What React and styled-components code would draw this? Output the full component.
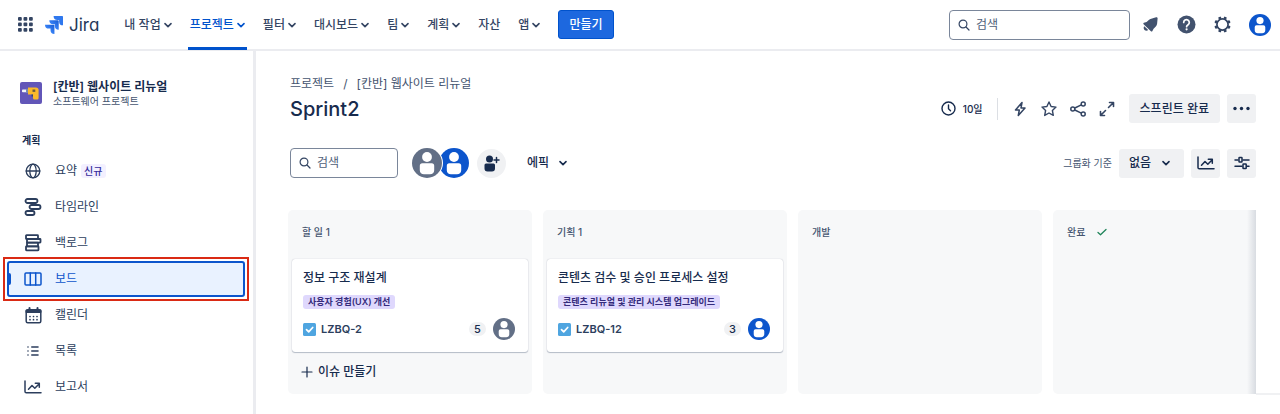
import styled, { createGlobalStyle, css } from "styled-components";

const GlobalStyle = createGlobalStyle`
  * {
    box-sizing: border-box;
  }
  body {
    margin: 0;
    background: #fff;
    color: #172b4d;
    font-family: Inter, "Noto Sans CJK KR", sans-serif;
    font-size: 12px;
    line-height: 16px;
  }
  button, input, select {
    font: inherit;
    color: inherit;
  }
  svg {
    display: block;
    flex-shrink: 0;
  }
`;

const Page = styled.div`
  min-height: 100vh;
  display: flex;
  flex-direction: column;
`;

/* ---------- top bar ---------- */
const Header = styled.header`
  display: flex;
  align-items: center;
  height: 51px;
  padding: 0 9px 0 18px;
  border-bottom: 2px solid #ebecf0;
`;

const IconButton = styled.button`
  display: flex;
  align-items: center;
  justify-content: center;
  padding: 0;
  border: none;
  background: transparent;
  color: #344563;
  cursor: pointer;
`;

const Logo = styled.a`
  display: flex;
  align-items: center;
  gap: 6px;
  margin: 0 23px 0 12px;
  color: #253858;
  text-decoration: none;
  font-size: 17px;
  line-height: 20px;
  font-feature-settings: "cv11", "ss03";
`;

const Nav = styled.nav`
  display: flex;
  align-self: stretch;
  gap: 14px;
`;

const NavItem = styled.button`
  display: flex;
  align-items: center;
  gap: 3px;
  height: 50px;
  padding: 0 2px;
  border: none;
  background: transparent;
  font-weight: 500;
  white-space: nowrap;
  color: ${({ $active }) => ($active ? "#0052cc" : "#344563")};
  box-shadow: ${({ $active }) => ($active ? "inset 0 -3px 0 #0052cc" : "none")};
  cursor: pointer;
`;

const CreateButton = styled.button`
  height: 29px;
  margin-left: 16px;
  padding: 0 10px;
  border: 1px solid #0052cc;
  border-radius: 3px;
  background: #1d68df;
  color: #fff;
  font-weight: 500;
  white-space: nowrap;
  cursor: pointer;
`;

const HeaderTools = styled.div`
  display: flex;
  align-items: center;
  gap: 12px;
  margin-left: auto;
`;

const SearchBox = styled.label`
  display: flex;
  align-items: center;
  gap: 6px;
  width: ${({ $wide }) => ($wide ? "181px" : "108px")};
  height: 30px;
  padding: 0 8px;
  border: 1px solid #7a869a;
  border-radius: 4px;
  background: #fff;
  color: #344563;
`;

const SearchInput = styled.input`
  flex: 1;
  min-width: 0;
  padding: 0;
  border: none;
  outline: none;
  background: transparent;
  &::placeholder {
    color: #505f79;
    opacity: 1;
  }
`;

/* ---------- sidebar ---------- */
const Body = styled.div`
  flex: 1;
  display: flex;
`;

const Sidebar = styled.aside`
  width: 256px;
  flex-shrink: 0;
  padding: 28px 8px 8px 7px;
  border-right: 3px solid #ebecf0;
`;

const Project = styled.div`
  display: flex;
  align-items: center;
  gap: 11px;
  padding-left: 13px;
`;

const ProjectName = styled.div`
  font-weight: 600;
`;

const ProjectType = styled.div`
  font-size: 10px;
  line-height: 12px;
  color: #44546f;
`;

const GroupLabel = styled.h2`
  margin: 25px 0 5px;
  padding-left: 15px;
  font-size: 10px;
  line-height: 16px;
  font-weight: 600;
`;

const SideLink = styled.a`
  position: relative;
  display: flex;
  align-items: center;
  gap: 12px;
  height: 36px;
  padding: 0 14px;
  border: 2px solid transparent;
  border-radius: 3px;
  color: #2c3e5d;
  text-decoration: none;

  ${({ $active }) =>
    $active &&
    css`
      border-color: #0c55cc;
      background: #e9f2ff;
      color: #0c55cc;
      /* left marker */
      &::before {
        content: "";
        position: absolute;
        left: -1px;
        top: 10px;
        width: 3px;
        height: 12px;
        border-radius: 0 2px 2px 0;
        background: #0c55cc;
      }
      /* red highlight around the current view */
      &::after {
        content: "";
        position: absolute;
        inset: -6px;
        border: 2px solid #da2a14;
      }
    `}
`;

const SideIcon = styled.span`
  display: flex;
  justify-content: center;
  width: 20px;
`;

const SideText = styled.span`
  display: flex;
  align-items: center;
  gap: 4px;
`;

const NewBadge = styled.span`
  padding: 0 3px;
  border-radius: 3px;
  background: #f3f0ff;
  color: #352c9c;
  font-size: 10px;
  line-height: 14px;
  font-weight: 500;
`;

/* ---------- main ---------- */
const Main = styled.main`
  flex: 1;
  min-width: 0;
  padding: 25px 24px 20px 32px;
`;

const Breadcrumb = styled.div`
  display: flex;
  gap: 9px;
  padding-left: 2px;
  color: #44546f;
`;

const Crumb = styled.a`
  color: inherit;
  text-decoration: none;
`;

const Row = styled.div`
  display: flex;
  align-items: center;
  justify-content: space-between;
  padding-left: 2px;
  margin-top: ${({ $top }) => $top}px;
`;

const Group = styled.div`
  display: flex;
  align-items: center;
  gap: ${({ $gap }) => $gap}px;
`;

const Title = styled.h1`
  margin: 0;
  font-size: 20px;
  line-height: 28px;
  font-weight: 500;
`;

const DaysLeft = styled.span`
  display: flex;
  align-items: center;
  gap: 7px;
  font-size: 10px;
  font-weight: 500;
`;

const Divider = styled.span`
  width: 1px;
  height: 22px;
  background: #dcdfe4;
`;

const GrayButton = styled.button`
  display: flex;
  align-items: center;
  justify-content: center;
  height: 29px;
  min-width: 29px;
  padding: ${({ $square }) => ($square ? "0" : "0 11px")};
  border: none;
  border-radius: 3px;
  background: #f0f1f3;
  font-weight: 500;
  white-space: nowrap;
  cursor: pointer;
`;

const PlainButton = styled.button`
  display: flex;
  align-items: center;
  gap: 10px;
  padding: 0;
  border: none;
  background: transparent;
  font-weight: 500;
  cursor: pointer;
`;

const People = styled.div`
  display: flex;
  align-items: center;
  margin-left: 13px;
`;

const PersonButton = styled.button`
  position: relative;
  display: flex;
  padding: 1px;
  margin-right: -5px;
  border: none;
  border-radius: 50%;
  background: #fff;
  cursor: pointer;
  z-index: ${({ $z }) => $z};
`;

const AddPerson = styled.button`
  display: flex;
  align-items: center;
  justify-content: center;
  width: 29px;
  height: 29px;
  margin: 0 21px 0 12px;
  padding: 0;
  border: none;
  border-radius: 50%;
  background: #f0f1f3;
  cursor: pointer;
`;

const GroupByLabel = styled.label`
  font-size: 10px;
  color: #44546f;
`;

const SelectWrap = styled.div`
  position: relative;
  svg {
    position: absolute;
    right: 14px;
    top: 10px;
    pointer-events: none;
  }
`;

const GroupSelect = styled.select`
  display: block;
  width: 65px;
  height: 29px;
  padding: 0 24px 0 10px;
  border: none;
  border-radius: 3px;
  appearance: none;
  background: #f0f1f3;
  font-weight: 500;
`;

/* ---------- board ---------- */
const BoardFrame = styled.div`
  position: relative;
  margin-top: 31px;
  /* scroll shadow on the right edge */
  &::after {
    content: "";
    position: absolute;
    top: 0;
    right: 0;
    bottom: 0;
    width: 9px;
    background: linear-gradient(to right, rgba(9, 30, 66, 0), rgba(9, 30, 66, 0.13));
  }
  /* scrollbar track end */
  &::before {
    content: "";
    position: absolute;
    left: 100%;
    bottom: -1px;
    width: 24px;
    height: 2px;
    background: #f0f1f3;
  }
`;

const Board = styled.div`
  display: flex;
  gap: 11px;
  overflow: hidden;
`;

const Column = styled.section`
  flex: 0 0 244px;
  min-height: 184px;
  padding: 0 4px 12px;
  border-radius: 5px;
  background: #f7f8f9;
`;

const ColumnHead = styled.h3`
  display: flex;
  align-items: center;
  gap: 12px;
  height: 43px;
  margin: 0 0 6px;
  padding: 0 10px;
  font-size: 10px;
  font-weight: 500;
  color: #44546f;
`;

const Card = styled.article`
  padding: 10px 13px 12px 11px;
  border-radius: 3px;
  background: #fff;
  box-shadow: 0 1px 1px rgba(9, 30, 66, 0.25), 0 0 1px rgba(9, 30, 66, 0.31);
`;

const CardTitle = styled.div`
  line-height: 18px;
  font-weight: 500;
`;

const Epic = styled.span`
  display: block;
  width: fit-content;
  margin: 8px 0 9px;
  padding: 0 5px;
  border-radius: 3px;
  background: #dfd8fd;
  color: #352c7c;
  font-size: 9px;
  line-height: 14px;
  font-weight: 600;
  white-space: nowrap;
`;

const CardFooter = styled.div`
  display: flex;
  align-items: center;
  gap: 5px;
`;

const IssueKey = styled.a`
  flex: 1;
  color: #2c3e5d;
  text-decoration: none;
  font-size: 11px;
  font-weight: 600;
`;

const Points = styled.span`
  min-width: 17px;
  margin-right: 2px;
  padding: 0 5px;
  border-radius: 7px;
  background: #f0f1f3;
  font-size: 11px;
  line-height: 14px;
  font-weight: 500;
  text-align: center;
`;

const CreateIssue = styled.button`
  display: flex;
  align-items: center;
  gap: 5px;
  margin: 12px 0 0;
  padding: 0 9px;
  border: none;
  background: transparent;
  font-weight: 500;
  cursor: pointer;
`;

/* ---------- icons ---------- */
const Stroke = ({ w = 16, h, box, sw = 1.5, children }) => (
  <svg
    width={w}
    height={h || w}
    viewBox={box || `0 0 ${w} ${h || w}`}
    fill="none"
    stroke="currentColor"
    strokeWidth={sw}
    strokeLinecap="round"
    strokeLinejoin="round"
    aria-hidden="true"
  >
    {children}
  </svg>
);

const Chevron = () => (
  <Stroke w={8} sw={1.6}>
    <path d="M1 2.6 4 5.6 7 2.6" />
  </Stroke>
);

const SearchIcon = () => (
  <Stroke w={12} sw={1.2}>
    <circle cx="5" cy="5" r="3.9" />
    <path d="M8 8l3 3" />
  </Stroke>
);

const AppsIcon = () => (
  <svg width="15" height="15" viewBox="0 0 15 15" fill="currentColor" aria-hidden="true">
    {[0, 5.5, 11].map((y) =>
      [0, 5.5, 11].map((x) => <rect key={`${x}-${y}`} x={x} y={y} width="3.8" height="3.8" rx="1" />)
    )}
  </svg>
);

const JiraMark = () => (
  <svg width="18" height="18" viewBox="0 0 24 24" aria-hidden="true">
    <defs>
      <linearGradient id="jira-shade" x1="1" y1="0" x2="0.3" y2="0.7">
        <stop offset="0.1" stopColor="#1a5fd6" />
        <stop offset="1" stopColor="#3f8bff" />
      </linearGradient>
    </defs>
    <path
      fill="url(#jira-shade)"
      d="M11.571 11.513H0a5.218 5.218 0 0 0 5.232 5.215h2.13v2.057A5.215 5.215 0 0 0 12.575 24V12.518a1.005 1.005 0 0 0-1.005-1.005z"
    />
    <path
      fill="url(#jira-shade)"
      d="M17.294 5.757H5.736a5.215 5.215 0 0 0 5.215 5.214h2.129v2.058a5.218 5.218 0 0 0 5.215 5.214V6.758a1.001 1.001 0 0 0-1.001-1.001z"
    />
    <path
      fill="#2f78ee"
      d="M23.013 0H11.455a5.215 5.215 0 0 0 5.215 5.215h2.129v2.057A5.215 5.215 0 0 0 24 12.483V1.005A1.001 1.001 0 0 0 23.013 0z"
    />
  </svg>
);

const BellIcon = () => (
  <svg width="17" height="17" viewBox="0 0 17 17" fill="#42526e" aria-hidden="true">
    <path d="M15.200 1.400c.4.300.5.700.4 1.200l-.5 5.200c-.1 1-.6 2-1.300 2.700l-2.200 2.200-1.200 2.300c-.3.600-1.100.7-1.500.2L1.600 8.200c-.5-.5-.3-1.300.3-1.500l2.700-.8 2.200-2c.7-.6 1.500-1 2.400-1.200l4.900-1.400c.4-.1.800-.1 1.100.1z" />
    <path d="M2.300 10.200 6.200 14c-1 .9-2.700.9-3.700-.1-1-1-1.100-2.700-.2-3.700z" />
  </svg>
);

const HelpIcon = () => (
  <svg width="19" height="19" viewBox="0 0 19 19" aria-hidden="true">
    <circle cx="9.5" cy="9.5" r="9" fill="#42526e" />
    <path
      d="M6.700 7.400a2.800 2.800 0 1 1 4.400 2.300c-.9.600-1.500 1-1.500 2"
      fill="none"
      stroke="#fff"
      strokeWidth="1.700"
      strokeLinecap="round"
    />
    <circle cx="9.600" cy="14.300" r="1.100" fill="#fff" />
  </svg>
);

const GearIcon = () => (
  <svg width="17" height="17" viewBox="-8.5 -8.5 17 17" aria-hidden="true">
    <circle r="5.600" fill="none" stroke="currentColor" strokeWidth="1.700" />
    {[22.5, 67.5, 112.5, 157.5, 202.5, 247.5, 292.5, 337.5].map((a) => (
      <rect
        key={a}
        x="-1.400"
        y="-8.200"
        width="2.800"
        height="2.600"
        rx="0.700"
        fill="currentColor"
        transform={`rotate(${a})`}
      />
    ))}
  </svg>
);

const Avatar = ({ size, color }) => (
  <svg width={size} height={size} viewBox="0 0 30 30" aria-hidden="true">
    <circle cx="15" cy="15" r="15" fill={color} />
    <circle cx="15" cy="9" r="4.900" fill="#fff" />
    <path
      d="M10.300 15.200h9.400a2.500 2.500 0 0 1 2.500 2.500v4.500c0 2.400-1.800 4-4.200 4h-6c-2.400 0-4.200-1.600-4.200-4v-4.500a2.500 2.500 0 0 1 2.500-2.500z"
      fill="#fff"
    />
  </svg>
);

const ProjectIcon = () => (
  <svg width="22" height="22" viewBox="0 0 22 22" aria-hidden="true">
    <rect width="22" height="22" rx="2" fill="#6256b8" />
    <rect x="2" y="7.500" width="5" height="2.800" rx="0.800" fill="#f4f5f7" />
    <rect x="6" y="6.800" width="2.500" height="4.200" fill="#7a8bb0" />
    <path d="M8 5.500h8a2.600 2.600 0 0 1 2.600 2.600V16a1.500 1.500 0 0 1-1.500 1.500h-2.600a1.500 1.500 0 0 1-1.500-1.500v-3.500H8z" fill="#f9b82b" />
    <path d="M12.500 7.500h2.800v2.400h-2.800z" fill="#6b5b3c" />
    <path d="M11.500 12.500H13v2h-1.500z" fill="#344563" />
  </svg>
);

const GlobeIcon = () => (
  <Stroke w={16} sw={1.3}>
    <circle cx="8" cy="8" r="6.800" />
    <ellipse cx="8" cy="8" rx="3.200" ry="6.800" />
    <path d="M1.200 8h13.600" />
  </Stroke>
);

const TimelineIcon = () => (
  <Stroke w={18} sw={1.800}>
    <rect x="1.500" y="1" width="12" height="4" rx="2" />
    <rect x="5.500" y="7" width="11" height="4" rx="2" />
    <rect x="1.500" y="13" width="9" height="4" rx="2" />
  </Stroke>
);

const BacklogIcon = () => (
  <Stroke w={18} sw={1.800}>
    <rect x="2" y="1.200" width="12" height="3.800" rx="0.500" />
    <rect x="3" y="5" width="13.500" height="3.600" rx="0.500" />
    <path d="M3 8.600h11v3.700H3z" />
    <rect x="2" y="12.300" width="12.500" height="4" rx="0.500" />
  </Stroke>
);

const BoardIcon = () => (
  <Stroke w={18} h={14} sw={1.500}>
    <rect x="1" y="1" width="16" height="12" rx="1" />
    <path d="M6.300 1v12M11.700 1v12" />
  </Stroke>
);

const CalendarIcon = () => (
  <Stroke w={17} sw={1.500}>
    <rect x="1.200" y="2.800" width="14.600" height="13" rx="1.500" />
    <path d="M1.500 3.500h14v1.500h-14zM4.500 1v2M12.500 1v2" strokeWidth="2" />
    <path d="M5 9.500h.01M8.500 9.500h.01M12 9.500h.01M5 12.700h.01M8.500 12.700h.01M12 12.700h.01" strokeWidth="1.700" />
  </Stroke>
);

const ListIcon = () => (
  <Stroke w={12} sw={1.600}>
    <path d="M1 2h.01M1 6h.01M1 10h.01M4.800 2h6.200M4.800 6h6.200M4.800 10h6.200" />
  </Stroke>
);

const ChartIcon = () => (
  <Stroke w={18} h={14} sw={1.500}>
    <path d="M1 1v10.500c0 .8.500 1.300 1.300 1.300H17" />
    <path d="M4.500 9.300 8 5.500l2.800 2.700L15 4M11.300 3.200h4v4" />
  </Stroke>
);

const ClockIcon = () => (
  <Stroke w={15} sw={1.400}>
    <circle cx="7.500" cy="7.500" r="6.500" />
    <path d="M7.500 4v3.700l2 2" />
  </Stroke>
);

const BoltIcon = () => (
  <Stroke w={16} sw={1.500}>
    <path d="M10 1.500 3.500 9h3.800L6.300 14.500 13 7H9z" />
  </Stroke>
);

const StarIcon = () => (
  <Stroke w={16} sw={1.400}>
    <path d="m8 1 2.100 4.500 4.900.6-3.600 3.400.9 4.900L8 12l-4.300 2.400.9-4.900L1 6.100l4.900-.6z" />
  </Stroke>
);

const ShareIcon = () => (
  <Stroke w={16}>
    <circle cx="2.800" cy="8" r="2" />
    <circle cx="13.200" cy="3" r="2" />
    <circle cx="13.200" cy="13" r="2" />
    <path d="m4.800 7 6.500-3.200M4.800 9l6.500 3.200" />
  </Stroke>
);

const ExpandIcon = () => (
  <Stroke w={16} sw={1.600}>
    <path d="M10.500 1.500h4v4M14.500 1.500l-5 5M5.500 14.500h-4v-4M1.500 14.500l5-5" />
  </Stroke>
);

const DotsIcon = () => (
  <svg width="17" height="5" viewBox="0 0 17 5" fill="currentColor" aria-hidden="true">
    <circle cx="2" cy="2.500" r="1.700" />
    <circle cx="8.500" cy="2.500" r="1.700" />
    <circle cx="15" cy="2.500" r="1.700" />
  </svg>
);

const SlidersIcon = () => (
  <Stroke w={16} h={14}>
    <path d="M1 4h3M9 4h6M1 10.300h7M13 10.300h2" />
    <rect x="5" y="1.500" width="3" height="4.500" rx="0.500" />
    <rect x="9" y="8" width="3.200" height="4.500" rx="0.500" />
  </Stroke>
);

const AddPersonIcon = () => (
  <svg width="16" height="17" viewBox="0 0 16 17" aria-hidden="true">
    <circle cx="5.500" cy="4" r="3.500" fill="currentColor" />
    <path d="M2 8.500h7.500A1.500 1.500 0 0 1 11 10v3.500a3 3 0 0 1-3 3H3.500a3 3 0 0 1-3-3V10A1.500 1.500 0 0 1 2 8.500z" fill="currentColor" />
    <path d="M12.500 2.500v5M10 5h5" stroke="currentColor" strokeWidth="1.500" strokeLinecap="round" />
  </svg>
);

const TaskIcon = () => (
  <svg width="13" height="13" viewBox="0 0 13 13" role="img" aria-label="작업">
    <rect width="13" height="13" rx="1.500" fill="#4fa5e0" />
    <path d="m3.500 6.700 2.200 2.200 4-4.400" fill="none" stroke="#fff" strokeWidth="1.700" strokeLinecap="round" strokeLinejoin="round" />
  </svg>
);

const CheckIcon = () => (
  <Stroke w={10} h={8} sw={1.300}>
    <path d="m1 4.500 2.500 2.200L9 1.500" stroke="#1f845a" />
  </Stroke>
);

const PlusIcon = () => (
  <Stroke w={12} sw={1.200}>
    <path d="M6 1v10M1 6h10" />
  </Stroke>
);

/* ---------- data ---------- */
const GRAY = "#626f86";
const BLUE = "#0c55cc";

const navItems = [
  { label: "내 작업", menu: true },
  { label: "프로젝트", menu: true, active: true },
  { label: "필터", menu: true },
  { label: "대시보드", menu: true },
  { label: "팀", menu: true },
  { label: "계획", menu: true },
  { label: "자산" },
  { label: "앱", menu: true },
];

const sideItems = [
  { label: "요약", icon: <GlobeIcon />, badge: "신규" },
  { label: "타임라인", icon: <TimelineIcon /> },
  { label: "백로그", icon: <BacklogIcon /> },
  { label: "보드", icon: <BoardIcon />, active: true },
  { label: "캘린더", icon: <CalendarIcon /> },
  { label: "목록", icon: <ListIcon /> },
  { label: "보고서", icon: <ChartIcon /> },
];

const columns = [
  {
    name: "할 일 1",
    canCreate: true,
    cards: [{ title: "정보 구조 재설계", epic: "사용자 경험(UX) 개선", id: "LZBQ-2", points: 5, color: GRAY }],
  },
  {
    name: "기획 1",
    cards: [
      {
        title: "콘텐츠 검수 및 승인 프로세스 설정",
        epic: "콘텐츠 리뉴얼 및 관리 시스템 업그레이드",
        id: "LZBQ-12",
        points: 3,
        color: BLUE,
      },
    ],
  },
  { name: "개발", cards: [] },
  { name: "완료", done: true, cards: [] },
];

const TopBar = () => (
  <Header>
    <IconButton aria-label="앱 전환"><AppsIcon /></IconButton>
    <Logo href="#"><JiraMark />Jira</Logo>
    <Nav>
      {navItems.map(({ label, menu, active }) => (
        <NavItem key={label} $active={active}>
          {label}
          {menu && <Chevron />}
        </NavItem>
      ))}
    </Nav>
    <CreateButton>만들기</CreateButton>
    <HeaderTools>
      <SearchBox $wide>
        <SearchIcon />
        <SearchInput type="text" placeholder="검색" aria-label="검색" />
      </SearchBox>
      <Group $gap={18}>
        <IconButton aria-label="알림"><BellIcon /></IconButton>
        <IconButton aria-label="도움말"><HelpIcon /></IconButton>
        <IconButton aria-label="설정"><GearIcon /></IconButton>
        <IconButton aria-label="프로필"><Avatar size={22} color={BLUE} /></IconButton>
      </Group>
    </HeaderTools>
  </Header>
);

const SideMenu = () => (
  <Sidebar>
    <Project>
      <ProjectIcon />
      <div>
        <ProjectName>[칸반] 웹사이트 리뉴얼</ProjectName>
        <ProjectType>소프트웨어 프로젝트</ProjectType>
      </div>
    </Project>
    <GroupLabel>계획</GroupLabel>
    <nav>
      {sideItems.map(({ label, icon, badge, active }) => (
        <SideLink key={label} href="#" $active={active}>
          <SideIcon>{icon}</SideIcon>
          <SideText>
            {label}
            {badge && <NewBadge>{badge}</NewBadge>}
          </SideText>
        </SideLink>
      ))}
    </nav>
  </Sidebar>
);

const IssueCard = ({ title, epic, id, points, color }) => (
  <Card>
    <CardTitle>{title}</CardTitle>
    <Epic>{epic}</Epic>
    <CardFooter>
      <TaskIcon />
      <IssueKey href="#">{id}</IssueKey>
      <Points>{points}</Points>
      <Avatar size={22} color={color} />
    </CardFooter>
  </Card>
);

const App = () => {
  return (
    <Page>
      <GlobalStyle />
      <TopBar />
      <Body>
        <SideMenu />
        <Main>
          <Breadcrumb>
            <Crumb href="#">프로젝트</Crumb>
            <span>/</span>
            <Crumb href="#">[칸반] 웹사이트 리뉴얼</Crumb>
          </Breadcrumb>

          <Row $top={2}>
            <Title>Sprint2</Title>
            <Group $gap={14}>
              <DaysLeft><ClockIcon />10일</DaysLeft>
              <Divider />
              <Group $gap={13}>
                <IconButton aria-label="자동화"><BoltIcon /></IconButton>
                <IconButton aria-label="즐겨찾기"><StarIcon /></IconButton>
                <IconButton aria-label="공유"><ShareIcon /></IconButton>
                <IconButton aria-label="전체 화면"><ExpandIcon /></IconButton>
              </Group>
              <Group $gap={7}>
                <GrayButton>스프린트 완료</GrayButton>
                <GrayButton $square aria-label="더 보기"><DotsIcon /></GrayButton>
              </Group>
            </Group>
          </Row>

          <Row $top={24}>
            <Group $gap={0}>
              <SearchBox>
                <SearchIcon />
                <SearchInput type="text" placeholder="검색" aria-label="보드 검색" />
              </SearchBox>
              <People>
                <PersonButton $z={2} aria-label="담당자 1"><Avatar size={30} color={GRAY} /></PersonButton>
                <PersonButton $z={1} aria-label="담당자 2"><Avatar size={30} color={BLUE} /></PersonButton>
              </People>
              <AddPerson aria-label="사용자 추가"><AddPersonIcon /></AddPerson>
              <PlainButton>에픽<Chevron /></PlainButton>
            </Group>
            <Group $gap={7}>
              <GroupByLabel htmlFor="group-by">그룹화 기준</GroupByLabel>
              <SelectWrap>
                <GroupSelect id="group-by" defaultValue="none">
                  <option value="none">없음</option>
                </GroupSelect>
                <Chevron />
              </SelectWrap>
              <GrayButton $square aria-label="인사이트"><ChartIcon /></GrayButton>
              <GrayButton $square aria-label="보기 설정"><SlidersIcon /></GrayButton>
            </Group>
          </Row>

          <BoardFrame>
            <Board>
              {columns.map((col) => (
                <Column key={col.name}>
                  <ColumnHead>
                    {col.name}
                    {col.done && <CheckIcon />}
                  </ColumnHead>
                  {col.cards.map((card) => (
                    <IssueCard key={card.id} {...card} />
                  ))}
                  {col.canCreate && (
                    <CreateIssue><PlusIcon />이슈 만들기</CreateIssue>
                  )}
                </Column>
              ))}
            </Board>
          </BoardFrame>
        </Main>
      </Body>
    </Page>
  );
};

export default App;
